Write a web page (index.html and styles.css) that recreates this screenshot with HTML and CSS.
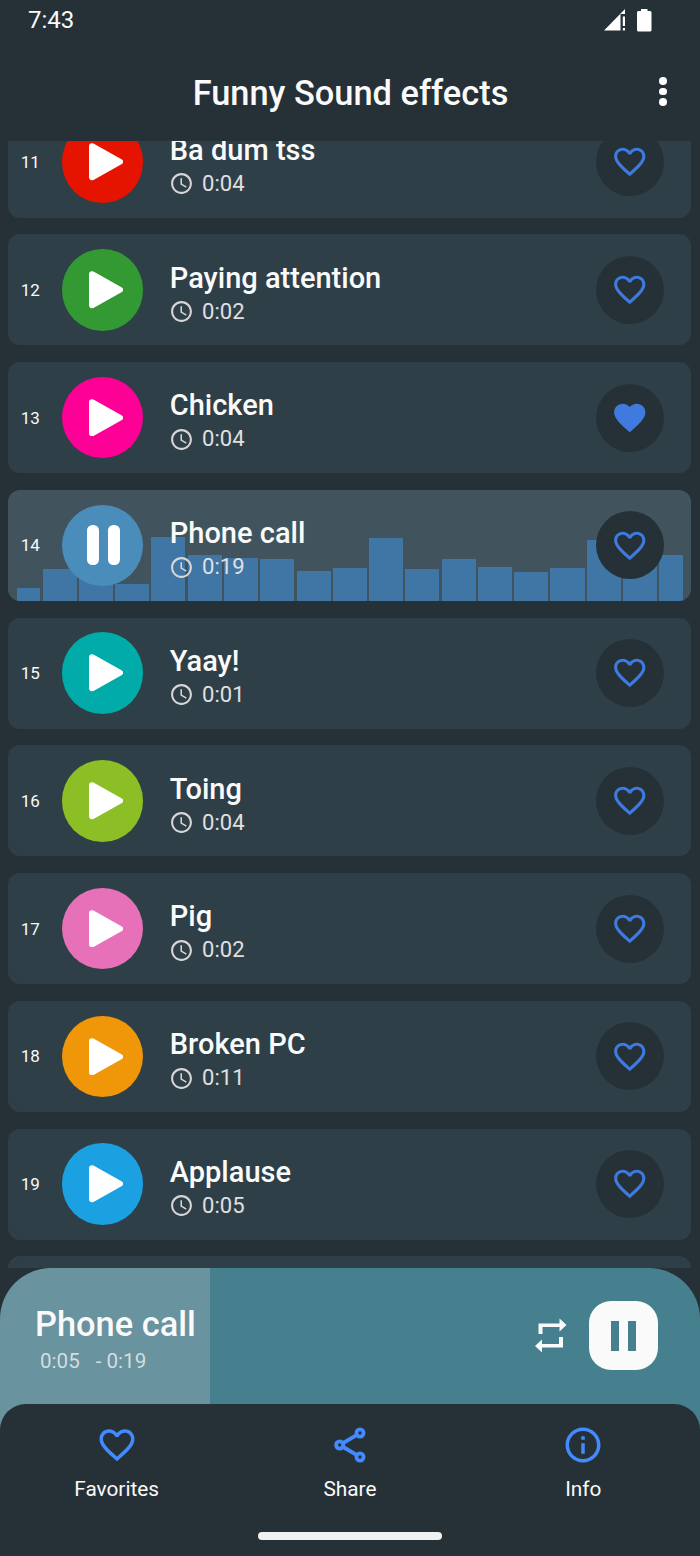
FILE: index.html
```
<!DOCTYPE html>
<html lang="en">
<head>
    <meta charset="UTF-8">
    <meta name="viewport" content="width=device-width, initial-scale=1.0">
    <title>Funny Sound effects</title>
    <link rel="stylesheet" href="styles.css">
</head>
<body>

    <!-- shared icons -->
    <svg class="sprite" width="0" height="0">
        <symbol id="play" viewBox="0 0 34 37.5">
            <path d="M3 3.2 L31 18.75 L3 34.3 Z" fill="#fff" stroke="#fff" stroke-width="6" stroke-linejoin="round"/>
        </symbol>
        <symbol id="pause" viewBox="0 0 34 40">
            <rect x="0" y="0" width="12" height="40" rx="5.5" fill="#fff"/>
            <rect x="21" y="0" width="12" height="40" rx="5.5" fill="#fff"/>
        </symbol>
        <symbol id="clock" viewBox="0 0 24 24">
            <path d="M11.99 2C6.47 2 2 6.48 2 12s4.47 10 9.99 10C17.52 22 22 17.52 22 12S17.52 2 11.99 2zM12 20c-4.42 0-8-3.58-8-8s3.58-8 8-8 8 3.58 8 8-3.58 8-8 8zm.5-13H11v6l5.25 3.15.75-1.23-4.5-2.67z"/>
        </symbol>
        <symbol id="heart" viewBox="0 0 24 24">
            <path d="M16.5 3c-1.74 0-3.41.81-4.5 2.09C10.91 3.81 9.24 3 7.5 3 4.42 3 2 5.42 2 8.5c0 3.78 3.4 6.86 8.55 11.54L12 21.35l1.45-1.32C18.6 15.36 22 12.28 22 8.5 22 5.42 19.58 3 16.5 3zm-4.4 15.55l-.1.1-.1-.1C7.14 14.24 4 11.39 4 8.5 4 6.5 5.5 5 7.5 5c1.54 0 3.04.99 3.57 2.36h1.87C13.46 5.99 14.96 5 16.5 5c2 0 3.5 1.5 3.5 3.5 0 2.89-3.14 5.74-7.9 10.05z"/>
        </symbol>
        <symbol id="heart-full" viewBox="0 0 24 24">
            <path d="M12 21.35l-1.45-1.32C5.4 15.36 2 12.28 2 8.5 2 5.42 4.42 3 7.5 3c1.74 0 3.41.81 4.5 2.09C13.09 3.81 14.76 3 16.5 3 19.58 3 22 5.42 22 8.5c0 3.78-3.4 6.86-8.55 11.54L12 21.35z"/>
        </symbol>
    </svg>

    <div class="status-bar">
        <span class="time">7:43</span>
        <svg class="signal" width="22" height="22" viewBox="0 0 22 22">
            <path d="M0 21.5 L21 0 V5 H16.5 V21.5 Z" fill="#fff"/>
            <path d="M18.8 7.5 H21 V17 H18.8 Z M18.8 19 H21 V21.5 H18.8 Z" fill="#fff"/>
        </svg>
        <svg class="battery" width="15" height="23" viewBox="0 0 15 23">
            <path d="M4 0 H10.5 V2 H13 Q14.5 2 14.5 3.5 V21 Q14.5 22.5 13 22.5 H1.5 Q0 22.5 0 21 V3.5 Q0 2 1.5 2 H4 Z" fill="#fff"/>
        </svg>
    </div>

    <div class="header">
        <h1>Funny Sound effects</h1>
        <div class="menu"><i></i><i></i><i></i></div>
    </div>

    <div class="list">
        <div class="row">
            <span class="num">11</span>
            <div class="circle red"><svg class="play"><use href="#play"/></svg></div>
            <div class="info">
                <div class="name">Ba dum tss</div>
                <div class="length"><svg class="clock"><use href="#clock"/></svg>0:04</div>
            </div>
            <div class="fav"><svg><use href="#heart"/></svg></div>
        </div>
        <div class="row">
            <span class="num">12</span>
            <div class="circle green"><svg class="play"><use href="#play"/></svg></div>
            <div class="info">
                <div class="name">Paying attention</div>
                <div class="length"><svg class="clock"><use href="#clock"/></svg>0:02</div>
            </div>
            <div class="fav"><svg><use href="#heart"/></svg></div>
        </div>
        <div class="row">
            <span class="num">13</span>
            <div class="circle magenta"><svg class="play"><use href="#play"/></svg></div>
            <div class="info">
                <div class="name">Chicken</div>
                <div class="length"><svg class="clock"><use href="#clock"/></svg>0:04</div>
            </div>
            <div class="fav"><svg><use href="#heart-full"/></svg></div>
        </div>
        <div class="row active">
            <!-- visualizer behind the playing row -->
            <div class="bars">
                <i class="edge" style="height: 12.5px"></i>
                <i style="height: 31.5px"></i>
                <i style="height: 31px"></i>
                <i style="height: 17px"></i>
                <i style="height: 63.5px"></i>
                <i style="height: 46px"></i>
                <i style="height: 42.5px"></i>
                <i style="height: 42px"></i>
                <i style="height: 29.5px"></i>
                <i style="height: 32.5px"></i>
                <i style="height: 62.5px"></i>
                <i style="height: 31.5px"></i>
                <i style="height: 42px"></i>
                <i style="height: 33.5px"></i>
                <i style="height: 28.5px"></i>
                <i style="height: 33px"></i>
                <i style="height: 60.5px"></i>
                <i style="height: 36px"></i>
                <i class="edge" style="height: 46px"></i>
            </div>
            <span class="num">14</span>
            <div class="circle blue"><svg class="pause"><use href="#pause"/></svg></div>
            <div class="info">
                <div class="name">Phone call</div>
                <div class="length"><svg class="clock"><use href="#clock"/></svg>0:19</div>
            </div>
            <div class="fav"><svg><use href="#heart"/></svg></div>
        </div>
        <div class="row">
            <span class="num">15</span>
            <div class="circle teal"><svg class="play"><use href="#play"/></svg></div>
            <div class="info">
                <div class="name">Yaay!</div>
                <div class="length"><svg class="clock"><use href="#clock"/></svg>0:01</div>
            </div>
            <div class="fav"><svg><use href="#heart"/></svg></div>
        </div>
        <div class="row">
            <span class="num">16</span>
            <div class="circle lime"><svg class="play"><use href="#play"/></svg></div>
            <div class="info">
                <div class="name">Toing</div>
                <div class="length"><svg class="clock"><use href="#clock"/></svg>0:04</div>
            </div>
            <div class="fav"><svg><use href="#heart"/></svg></div>
        </div>
        <div class="row">
            <span class="num">17</span>
            <div class="circle pink"><svg class="play"><use href="#play"/></svg></div>
            <div class="info">
                <div class="name">Pig</div>
                <div class="length"><svg class="clock"><use href="#clock"/></svg>0:02</div>
            </div>
            <div class="fav"><svg><use href="#heart"/></svg></div>
        </div>
        <div class="row">
            <span class="num">18</span>
            <div class="circle orange"><svg class="play"><use href="#play"/></svg></div>
            <div class="info">
                <div class="name">Broken PC</div>
                <div class="length"><svg class="clock"><use href="#clock"/></svg>0:11</div>
            </div>
            <div class="fav"><svg><use href="#heart"/></svg></div>
        </div>
        <div class="row">
            <span class="num">19</span>
            <div class="circle sky"><svg class="play"><use href="#play"/></svg></div>
            <div class="info">
                <div class="name">Applause</div>
                <div class="length"><svg class="clock"><use href="#clock"/></svg>0:05</div>
            </div>
            <div class="fav"><svg><use href="#heart"/></svg></div>
        </div>
        <div class="row"></div>
    </div>

    <div class="bottom">
        <div class="player">
            <div class="now">
                <div class="now-name">Phone call</div>
                <div class="now-time"><span>0:05</span><span>- 0:19</span></div>
            </div>
            <svg class="repeat" width="32" height="35" viewBox="0 0 32 35" fill="#fafafa">
                <path d="M3.5 16 V5.5 H24.5 V0.5 L31.5 7 L24.5 13.5 V9 H7.5 V16 Z"/>
                <path d="M28 19 V29.5 H7 V34.5 L0 28 L7 21.5 V26 H24 V19 Z"/>
            </svg>
            <div class="pause-btn"><i></i><i></i></div>
        </div>
        <div class="nav">
            <div class="tabs">
                <div class="tab">
                    <svg viewBox="0 0 24 24"><use href="#heart"/></svg>
                    <span>Favorites</span>
                </div>
                <div class="tab">
                    <svg viewBox="0 0 42 42" fill="none" stroke="#448aff" stroke-width="3.8">
                        <path d="M14.2 19 L27.5 11.2 M14.2 23 L27.5 30.8"/>
                        <circle cx="10.7" cy="21" r="3.6"/>
                        <circle cx="31" cy="9" r="3.6"/>
                        <circle cx="31" cy="33" r="3.6"/>
                    </svg>
                    <span>Share</span>
                </div>
                <div class="tab">
                    <svg viewBox="0 0 24 24"><path d="M11 7h2v2h-2zm0 4h2v6h-2zm1-9C6.48 2 2 6.48 2 12s4.48 10 10 10 10-4.48 10-10S17.52 2 12 2zm0 18c-4.41 0-8-3.59-8-8s3.59-8 8-8 8 3.59 8 8-3.59 8-8 8z"/></svg>
                    <span>Info</span>
                </div>
            </div>
            <div class="home"></div>
        </div>
    </div>

</body>
</html>
```

FILE: styles.css
```
* { box-sizing: border-box; }
body {
    margin: 0;
    width: 700px;
    height: 1556px;
    overflow: hidden;
    display: flex;
    flex-direction: column;
    background: #263137;
    color: #fafafa;
    font-family: Roboto, sans-serif;
}
svg { display: block; flex: none; }
.sprite { position: absolute; }
.status-bar {
    height: 41px;
    padding: 0 48px 1px 28px;
    display: flex;
    align-items: center;
}
.time { font-size: 24px; flex: 1; }
.signal { margin-right: 11px; }
.header {
    height: 100px;
    padding: 0 33px 0 38px;
    display: flex;
    align-items: center;
}
h1 {
    flex: 1;
    margin: 4px 0 0 4px;
    text-align: center;
    font-size: 34.4px;
    font-weight: 500;
}
.menu {
    width: 8px;
    margin-top: 1px;
    display: flex;
    flex-direction: column;
    gap: 2.5px;
}
.menu i {
    width: 7.8px;
    height: 7.8px;
    border-radius: 50%;
    background: #fff;
}

.list {
    height: 1127px;
    overflow: hidden;
    padding: 0 8.7px 0 8.3px;
}
.row {
    position: relative;
    height: 111px;
    margin-bottom: 16.75px;
    padding-left: 12.5px;
    padding-right: 27px;
    border-radius: 12px;
    overflow: hidden;
    display: flex;
    align-items: center;
    background: #2f3f48;
}
.row:first-child { margin-top: -34.3px; }
.row.active { background: #41545e; }
.row > * { position: relative; }
.num { width: 41px; font-size: 17px; }
.circle {
    width: 81.5px;
    height: 81.5px;
    border-radius: 50%;
    display: flex;
    align-items: center;
    justify-content: center;
}
.red { background: #e51400; }
.green { background: #339933; }
.magenta { background: #ff0097; }
.blue { background: #4a8dbb; }
.teal { background: #00aba9; }
.lime { background: #8cbf26; }
.pink { background: #e671b8; }
.orange { background: #f09609; }
.sky { background: #1ba1e2; }
.play { width: 34px; height: 37.5px; margin-left: 6.5px; }
.pause { width: 34px; height: 40px; margin-left: 2px; }
.info { flex: 1; margin-left: 26.5px; padding-top: 9.4px; }
.name {
    font-size: 29px;
    font-weight: 500;
    line-height: 34px;
}
.length {
    display: flex;
    align-items: center;
    font-size: 22px;
    line-height: 34px;
    color: #e0e0e0;
}
.clock {
    width: 25px;
    height: 25px;
    margin-left: -0.7px;
    margin-right: 8px;
    fill: #d6d6d6;
}
.fav {
    width: 68px;
    height: 68px;
    border-radius: 50%;
    background: #263137;
    display: flex;
    align-items: center;
    justify-content: center;
}
.fav svg { width: 37.5px; height: 37.5px; margin-right: 1px; fill: #3f7ade; }

.row .bars {
    position: absolute;
    left: 8.3px;
    right: 8.3px;
    bottom: 0;
    display: flex;
    align-items: flex-end;
    gap: 2.2px;
}
.bars i { flex: 34; background: #3f76a5; }
.bars .edge { flex: 23.7; }

.bottom { flex: 1; display: flex; flex-direction: column; }
.player {
    height: 162px;
    margin-bottom: -26px;
    padding: 0 42px 27px 35px;
    border-radius: 51px 51px 0 0;
    display: flex;
    align-items: center;
    background: linear-gradient(90deg, #68939f 30%, #467f8e 30%);
}
.now { flex: 1; padding-top: 6px; }
.now-name { font-size: 34.4px; font-weight: 500; line-height: 40px; }
.now-time {
    display: flex;
    gap: 16px;
    padding: 4px 0 0 5px;
    font-size: 20.6px;
    line-height: 26px;
    color: #d6dcde;
}
.repeat { margin-right: 22.5px; }
.pause-btn {
    width: 69px;
    height: 69px;
    border-radius: 22px;
    background: #fafafa;
    display: flex;
    align-items: center;
    justify-content: center;
    gap: 8.5px;
}
.pause-btn i { width: 8.7px; height: 30px; background: #467f8e; }
.nav {
    flex: 1;
    position: relative;
    padding-top: 20px;
    border-radius: 26px 26px 0 0;
    background: #263137;
}
.tabs { display: flex; }
.tab {
    flex: 1;
    display: flex;
    flex-direction: column;
    align-items: center;
    font-size: 20.8px;
}
.tab svg { width: 42px; height: 42px; fill: #448aff; }
.tab svg[fill="none"] { fill: none; }
.tab span { margin-top: 11px; line-height: 24px; }
.home {
    width: 184px;
    height: 8px;
    margin: 31px auto 0;
    border-radius: 4px;
    background: #f0f1f1;
}
```
